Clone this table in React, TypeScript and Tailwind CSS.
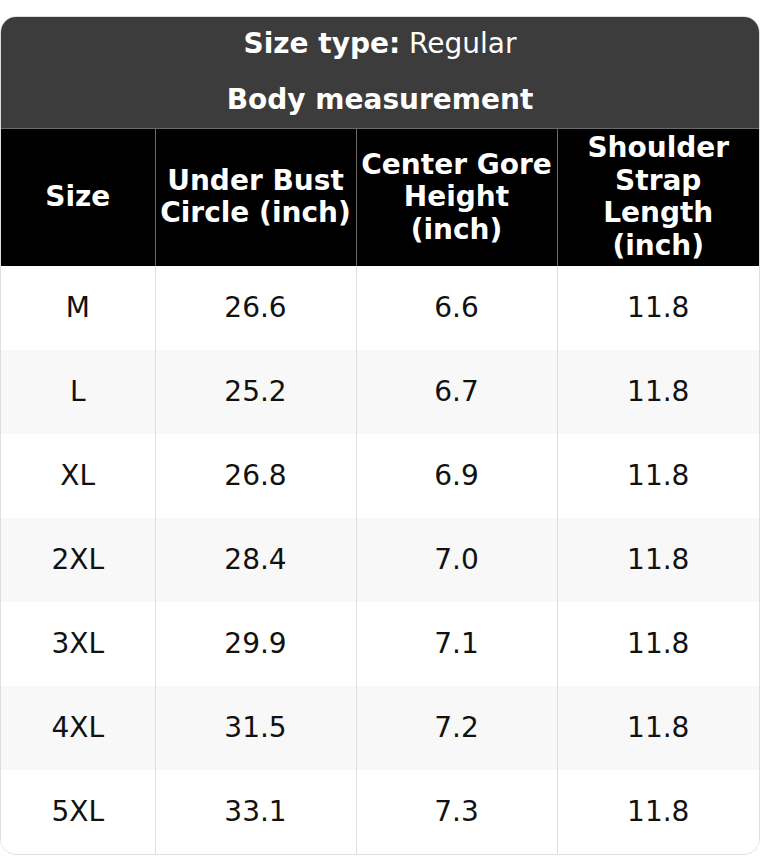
import React from "react";

const rows: [string, string, string, string][] = [
  ["M", "26.6", "6.6", "11.8"],
  ["L", "25.2", "6.7", "11.8"],
  ["XL", "26.8", "6.9", "11.8"],
  ["2XL", "28.4", "7.0", "11.8"],
  ["3XL", "29.9", "7.1", "11.8"],
  ["4XL", "31.5", "7.2", "11.8"],
  ["5XL", "33.1", "7.3", "11.8"],
];

const heads = ["Size", "Under Bust Circle (inch)", "Center Gore Height (inch)", "Shoulder Strap Length (inch)"];

export default function App() {
  return (
    <div className="bg-white pt-4 font-['DejaVu_Sans',sans-serif]">
      <div className="rounded-[16px] overflow-hidden border border-[#dedede]">
        {/* Titel */}
        <div className="bg-[#3c3c3c] text-white text-center text-[28px] leading-[32px]">
          <p className="pt-[11px] pb-[13px]">
            <b>Size type:</b> Regular
          </p>
          <p className="pt-[11px] pb-[12px] font-bold">Body measurement</p>
        </div>
        <table className="w-full table-fixed border-collapse text-center">
          <colgroup>
            <col className="w-[154px]" />
            <col className="w-[201px]" />
            <col className="w-[201px]" />
            <col />
          </colgroup>
          <thead>
            <tr className="h-[137px] border-t border-[#6a6a6a] bg-black">
              {heads.map((h, i) => (
                <th key={h}
                  className={`px-1 text-white font-bold text-[28px] leading-[32.5px] ${i > 0 ? "border-l border-[#6a6a6a]" : ""}`}>
                  {h}
                </th>
              ))}
            </tr>
          </thead>
          <tbody>
            {rows.map((r, ri) => (
              <tr key={r[0]} className={`h-[84px] ${ri % 2 === 1 ? "bg-[#f8f8f8]" : "bg-white"}`}>
                {r.map((c, ci) => (
                  <td key={ci}
                    className={`text-[28px] text-[#111] ${ci > 0 ? "border-l border-[#dedede]" : ""}`}>
                    {c}
                  </td>
                ))}
              </tr>
            ))}
          </tbody>
        </table>
      </div>
    </div>
  );
}
